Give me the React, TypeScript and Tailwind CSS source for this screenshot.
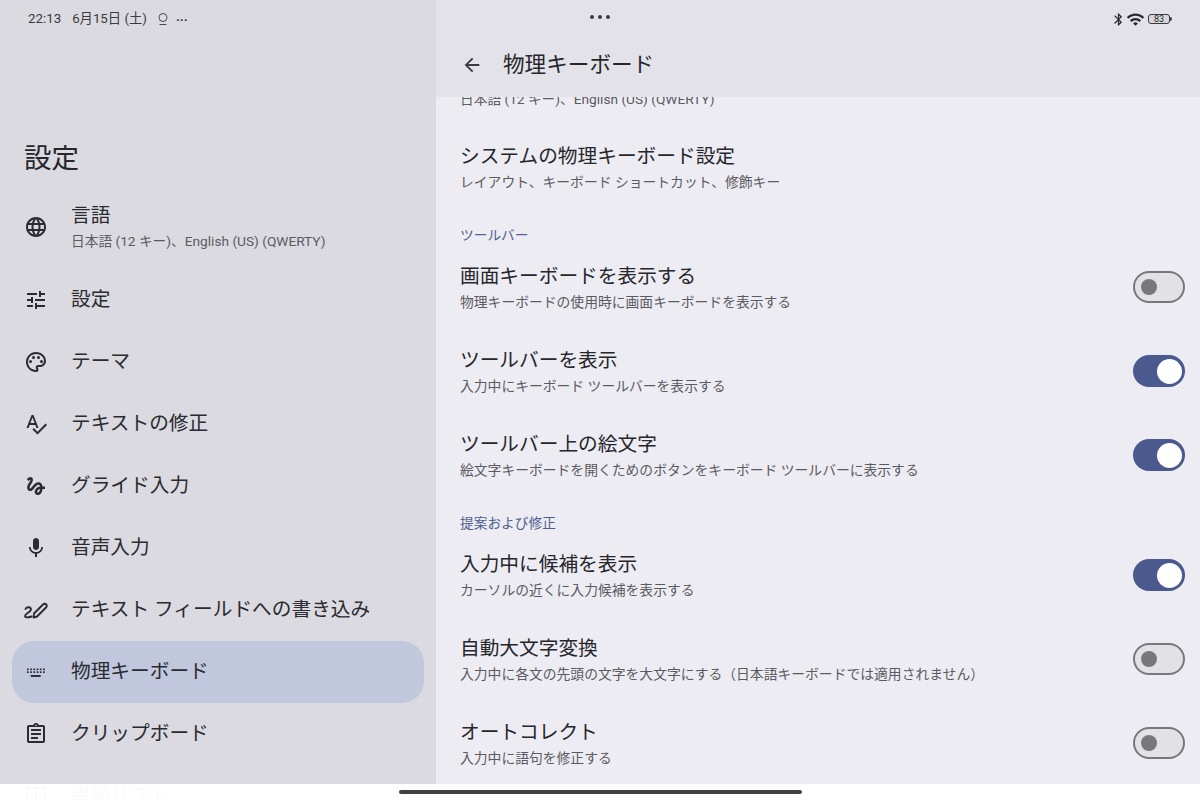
import { ReactNode } from 'react';
import { MdArrowBack, MdBluetooth, MdGesture, MdLanguage, MdMic, MdOutlineAssignment, MdOutlinePalette, MdSpellcheck, MdTune, MdWifi } from 'react-icons/md';

function KeyboardIcon() {
  return (
    <svg width="24" height="24" viewBox="0 0 24 24" fill="#2a2a30">
      {[3, 6.2, 9.4, 12.6, 15.8, 19].map((x) => <rect key={x} x={x} y="8.5" width="1.7" height="1.7" />)}
      {[3, 6.2, 9.4, 12.6, 15.8, 19].map((x) => <rect key={x} x={x} y="11.3" width="1.7" height="1.7" />)}
      <rect x="6.7" y="15" width="10" height="1.9" />
    </svg>
  );
}

function PenIcon() {
  return (
    <svg width="24" height="24" viewBox="0 0 24 24" fill="none" stroke="#2a2a30" strokeWidth="1.9" strokeLinecap="round" strokeLinejoin="round">
      <path d="M9.5 19.5 L10 15.5 L19 6.5 C20 5.5 22 5.5 22.5 7 C23 8 22.5 9 22 9.5 L13 18.5 Z" />
      <path d="M1.5 11 C2.5 8.5 7 8.5 7 11.5 C7 14 1 15.5 1 18 C1 20 5 19.5 7.5 18.5" />
    </svg>
  );
}

function BookIcon() {
  return (
    <svg width="24" height="24" viewBox="0 0 24 24" fill="none" stroke="#2a2a30" strokeWidth="2">
      <rect x="3" y="4" width="18" height="16" rx="1" />
      <path d="M12 4v16M6 9h3M6 13h3M15 9h3" />
    </svg>
  );
}

function BatteryIcon() {
  return (
    <div className="flex items-center">
      <div className="w-[22px] h-[10px] rounded-[3px] border border-[#3a3a40] bg-[#d8d8dc] flex items-center justify-center text-[9px] leading-none text-[#2a2a30]">83</div>
      <div className="w-[2px] h-[4px] bg-[#3a3a40] rounded-r-sm" />
    </div>
  );
}

function HotspotIcon() {
  return (
    <svg width="12" height="14" viewBox="0 0 12 14" fill="none" stroke="#4a4a50" strokeWidth="1">
      <circle cx="6" cy="5.5" r="4" />
      <path d="M2.5 12.5h7" />
    </svg>
  );
}

function NavRow({ icon, label, active }: { icon: ReactNode; label: string; active?: boolean }) {
  return (
    <div className={`mx-3 h-[62px] shrink-0 flex items-center gap-[23px] pl-3 rounded-[22px] ${active ? 'bg-[#c1c7dc]' : ''}`}>
      <div className="w-6 h-6 flex items-center justify-center text-[#2a2a30]">{icon}</div>
      <div className="text-[19.7px] leading-[28px] text-[#2a2a30]">{label}</div>
    </div>
  );
}

function Toggle({ on }: { on: boolean }) {
  if (on) {
    return (
      <div className="w-[52px] h-[32px] rounded-full bg-[#4a5a8e] flex items-center justify-end pr-[3px]">
        <div className="w-[25px] h-[25px] rounded-full bg-white" />
      </div>
    );
  }
  return (
    <div className="w-[52px] h-[32px] rounded-full bg-[#e2e2e6] border-2 border-[#77777d] flex items-center pl-[6px]">
      <div className="w-[16px] h-[16px] rounded-full bg-[#77777d]" />
    </div>
  );
}

function SettingRow({ title, sub, on }: { title: string; sub: string; on?: boolean }) {
  return (
    <div className="h-[84px] shrink-0 flex items-center justify-between pl-6 pr-[15px]">
      <div className="pt-[2px]">
        <div className="text-[19.7px] leading-[28px] text-[#26262b]">{title}</div>
        <div className="text-[13.8px] leading-[22px] text-[#5a5a60]">{sub}</div>
      </div>
      {on !== undefined && <Toggle on={on} />}
    </div>
  );
}

function SectionLabel({ children }: { children: ReactNode }) {
  return <div className="h-[36px] shrink-0 flex items-center pl-6 pt-[16px] text-[13.7px] text-[#4f5f90]">{children}</div>;
}

export default function App() {
  return (
    <div className="relative w-full h-[800px] overflow-hidden flex bg-[#edecf3] font-['Roboto','Noto_Sans_CJK_JP',sans-serif]">
      {/* SIDEBAR */}
      <aside className="w-[436px] shrink-0 h-full bg-[#dadae0] flex flex-col overflow-hidden">
        <div className="h-[38px] shrink-0 flex items-center pl-7 gap-[7px] text-[13.3px] text-[#3a3a40]">
          <span>22:13</span>
          <span className="ml-[4px]">6月15日 (土)</span>
          <span className="ml-[3px]"><HotspotIcon /></span>
          <span className="text-[13px] font-bold leading-none">···</span>
        </div>
        <h1 className="mt-[102px] pl-6 h-[38px] flex items-center text-[27.5px] font-normal text-[#26262b]">設定</h1>
        <div className="mt-[14px] flex flex-col">
          <div className="mx-3 h-[77px] shrink-0 flex items-center gap-[23px] pl-3 pb-[8px]">
            <MdLanguage size={24} color="#2a2a30" />
            <div>
              <div className="text-[19.7px] leading-[28px] text-[#2a2a30]">言語</div>
              <div className="mt-[1px] text-[13.7px] leading-[20px] text-[#5a5a60]">日本語 (12 キー)、English (US) (QWERTY)</div>
            </div>
          </div>
          <NavRow icon={<MdTune size={24} />} label="設定" />
          <NavRow icon={<MdOutlinePalette size={24} />} label="テーマ" />
          <NavRow icon={<MdSpellcheck size={24} />} label="テキストの修正" />
          <NavRow icon={<MdGesture size={24} />} label="グライド入力" />
          <NavRow icon={<MdMic size={24} />} label="音声入力" />
          <NavRow icon={<PenIcon />} label="テキスト フィールドへの書き込み" />
          <NavRow icon={<KeyboardIcon />} label="物理キーボード" active />
          <NavRow icon={<MdOutlineAssignment size={24} />} label="クリップボード" />
          <NavRow icon={<BookIcon />} label="単語リスト" />
        </div>
      </aside>

      {/* MAIN */}
      <main className="flex-1 h-full flex flex-col overflow-hidden">
        <header className="relative z-10 h-[97px] shrink-0 bg-[#e2e2e8] flex flex-col">
          <div className="h-[34px] shrink-0 flex items-center pr-[28px]">
            <div className="flex-1 flex gap-[4px] pl-[154px] -mt-[1px]">
              <div className="w-[4px] h-[4px] rounded-full bg-[#3a3a40]" />
              <div className="w-[4px] h-[4px] rounded-full bg-[#3a3a40]" />
              <div className="w-[4px] h-[4px] rounded-full bg-[#3a3a40]" />
            </div>
            <div className="flex items-center mt-[4px]">
              <MdBluetooth size={15} color="#2a2a30" />
              <MdWifi size={19} color="#2a2a30" />
              <div className="ml-[3px]"><BatteryIcon /></div>
            </div>
          </div>
          <div className="flex items-center pl-[25px] gap-[20px] mt-[15px]">
            <MdArrowBack size={22} color="#3a3a40" />
            <div className="text-[21.6px] leading-[32px] text-[#26262b]">物理キーボード</div>
          </div>
        </header>
        <div className="flex-1 overflow-hidden flex flex-col">
          <div className="shrink-0 -mt-[13px] h-[30px] pl-6 flex items-center text-[13.7px] text-[#5a5a60]">日本語 (12 キー)、English (US) (QWERTY)</div>
          <div className="mt-[11px] flex flex-col">
            <SettingRow title="システムの物理キーボード設定" sub="レイアウト、キーボード ショートカット、修飾キー" />
            <SectionLabel>ツールバー</SectionLabel>
            <SettingRow title="画面キーボードを表示する" sub="物理キーボードの使用時に画面キーボードを表示する" on={false} />
            <SettingRow title="ツールバーを表示" sub="入力中にキーボード ツールバーを表示する" on />
            <SettingRow title="ツールバー上の絵文字" sub="絵文字キーボードを開くためのボタンをキーボード ツールバーに表示する" on />
            <SectionLabel>提案および修正</SectionLabel>
            <SettingRow title="入力中に候補を表示" sub="カーソルの近くに入力候補を表示する" on />
            <SettingRow title="自動大文字変換" sub="入力中に各文の先頭の文字を大文字にする（日本語キーボードでは適用されません）" on={false} />
            <SettingRow title="オートコレクト" sub="入力中に語句を修正する" on={false} />
          </div>
        </div>
      </main>

      {/* HOME BAR */}
      <div className="absolute left-0 right-0 bottom-0 h-[16px] bg-white/[0.98] flex items-center justify-center z-20">
        <div className="w-[403px] h-[4px] rounded-full bg-[#3f3f44]" />
      </div>
    </div>
  );
}
